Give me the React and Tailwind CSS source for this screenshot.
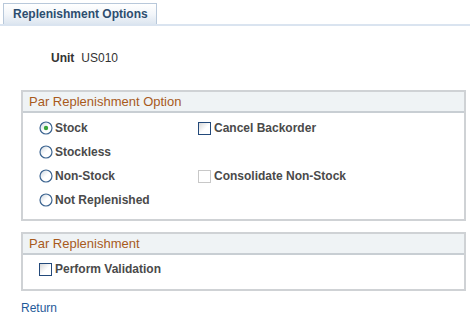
import React from "react";

function Radio({ checked }) {
  return (
    <svg width="14" height="14" viewBox="0 0 14 14" className="shrink-0">
      <defs>
        <linearGradient id={checked ? "rg1" : "rg0"} x1="0" y1="0" x2="1" y2="1">
          <stop offset="0" stopColor="#c9d3dd" />
          <stop offset="0.5" stopColor="#ffffff" />
          <stop offset="1" stopColor="#ffffff" />
        </linearGradient>
      </defs>
      <circle cx="7" cy="7" r="6" fill={`url(#${checked ? "rg1" : "rg0"})`} stroke="#3d6591" strokeWidth="1.2" />
      {checked && <circle cx="7" cy="7" r="2.2" fill="#3aa43a" />}
    </svg>
  );
}

function Check({ disabled }) {
  return (
    <span
      className={
        "inline-block w-[13px] h-[13px] shrink-0 border " +
        (disabled
          ? "border-[#c8c8c8] bg-white"
          : "border-[#23497a] bg-[linear-gradient(135deg,#d8d8d8_0%,#ffffff_55%,#ffffff_100%)]")
      }
    />
  );
}

function Header({ children }) {
  return (
    <div className="h-[21px] bg-[#eff3f5] border-b-2 border-[#c8ced3] flex items-center pl-[6px] text-[13px] text-[#a85a1c] leading-none">
      {children}
    </div>
  );
}

export default function App() {
  return (
    <div
      className="w-[470px] h-[325px] bg-white relative overflow-hidden"
      style={{ fontFamily: '"Liberation Sans", Arial, sans-serif' }}
    >
      {/* tab strip */}
      <div className="pt-[3px] pl-[3px]">
        <div className="w-[154px] h-[21px] border border-b-0 border-[#b8c8da] bg-[linear-gradient(180deg,#ffffff_0%,#f3f6fa_50%,#dde6f0_100%)] flex items-center pl-[9px] text-[12px] font-bold text-[#2d4d6f]">
          Replenishment Options
        </div>
      </div>
      <div className="h-[2px] bg-[#dae4f0]" />

      {/* unit */}
      <div className="mt-[25px] pl-[51px] flex items-center gap-[7px] text-[12px] leading-[14px] text-[#333333]">
        <span className="font-bold">Unit</span>
        <span>US010</span>
      </div>

      {/* group 1 */}
      <div className="mt-[25px] ml-[21px] w-[445px] border-2 border-[#cfd2d5]">
        <Header>Par Replenishment Option</Header>
        <div className="grid grid-cols-[159px_1fr] grid-rows-[repeat(4,24px)] pt-[3px] pb-[7px] pl-[16px] text-[12px] font-bold text-[#4a4a4a]">
          <div className="flex items-center gap-[2px]">
            <Radio checked />
            <span>Stock</span>
          </div>
          <div className="flex items-center gap-[3px]">
            <Check />
            <span>Cancel Backorder</span>
          </div>
          <div className="flex items-center gap-[2px]">
            <Radio />
            <span>Stockless</span>
          </div>
          <div />
          <div className="flex items-center gap-[2px]">
            <Radio />
            <span>Non-Stock</span>
          </div>
          <div className="flex items-center gap-[3px]">
            <Check disabled />
            <span>Consolidate Non-Stock</span>
          </div>
          <div className="flex items-center gap-[2px]">
            <Radio />
            <span>Not Replenished</span>
          </div>
          <div />
        </div>
      </div>

      {/* group 2 */}
      <div className="mt-[11px] ml-[21px] w-[445px] border-2 border-[#cfd2d5]">
        <Header>Par Replenishment</Header>
        <div className="pt-[2px] pb-[8px] pl-[16px] text-[12px] font-bold text-[#4a4a4a]">
          <div className="h-[24px] flex items-center gap-[3px]">
            <Check />
            <span>Perform Validation</span>
          </div>
        </div>
      </div>

      <div className="mt-[10px] ml-[21px] text-[12px] leading-[14px] text-[#1f5a99]">Return</div>
    </div>
  );
}
